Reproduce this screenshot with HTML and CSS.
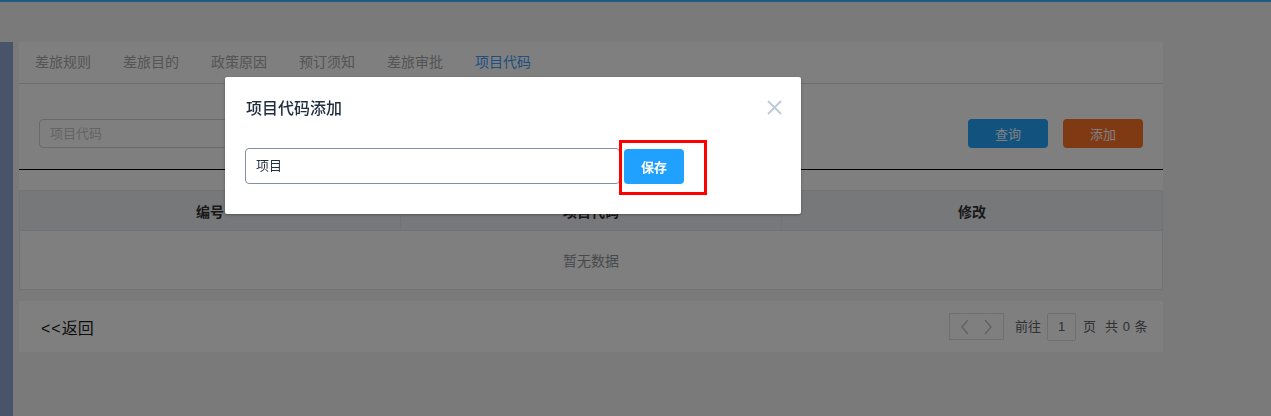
FILE: index.html
```html
<!DOCTYPE html>
<html lang="zh-CN">
<head>
<meta charset="utf-8">
<title>项目代码</title>
<link rel="stylesheet" href="styles.css">
</head>
<body>
<div class="topbar"></div>
<div class="layout">
  <aside class="sidebar"></aside>
  <main class="main">
    <section class="panel">
      <nav class="tabs">
        <span class="tab">差旅规则</span>
        <span class="tab">差旅目的</span>
        <span class="tab">政策原因</span>
        <span class="tab">预订须知</span>
        <span class="tab">差旅审批</span>
        <span class="tab active">项目代码</span>
      </nav>
      <div class="search">
        <div class="search-input">项目代码</div>
        <div class="search-actions">
          <button class="btn btn-query">查询</button>
          <button class="btn btn-add">添加</button>
        </div>
      </div>
      <div class="table-gap"></div>
      <table class="grid">
        <thead>
          <tr><th>编号</th><th>项目代码</th><th>修改</th></tr>
        </thead>
        <tbody>
          <tr><td colspan="3" class="empty">暂无数据</td></tr>
        </tbody>
      </table>
    </section>
    <section class="footer">
      <a class="back"><span class="arrows">&lt;&lt;</span>返回</a>
      <div class="pager">
        <span class="pager-nav">
          <svg width="12" height="16" viewBox="0 0 12 16"><path d="M9 1 L3 8 L9 15" fill="none" stroke="#c0c4cc" stroke-width="1.4"/></svg>
          <svg width="12" height="16" viewBox="0 0 12 16"><path d="M3 1 L9 8 L3 15" fill="none" stroke="#c0c4cc" stroke-width="1.4"/></svg>
        </span>
        <span class="pager-text">前往</span>
        <span class="pager-input">1</span>
        <span class="pager-text">页</span>
        <span class="pager-text total">共 0 条</span>
      </div>
    </section>
  </main>
</div>
<div class="overlay"></div>
<div class="dialog">
  <div class="dialog-header">
    <span class="dialog-title">项目代码添加</span>
    <span class="dialog-close">
      <svg width="15" height="15" viewBox="0 0 15 15"><path d="M1 1 L14 14 M14 1 L1 14" stroke="#bfcbd9" stroke-width="2" fill="none"/></svg>
    </span>
  </div>
  <div class="dialog-body">
    <div class="dialog-input">项目</div>
    <button class="btn-save">保存</button>
  </div>
  <div class="highlight"></div>
</div>
</body>
</html>
```
FILE: styles.css
```css
* { box-sizing: border-box; }
html, body { height: 100%; }
body {
  margin: 0;
  background: #f5f5f5;
  font-family: "Liberation Sans", "Noto Sans CJK SC", sans-serif;
  overflow: hidden;
}
.topbar { height: 2px; background: #3cb4ff; }
.layout { display: flex; margin-top: 40px; height: 374px; }
.sidebar { width: 13px; background: #90a8d2; }
.main { margin-left: 6px; width: 1144px; }
.panel { background: #fff; }
.tabs { display: flex; height: 42px; border-bottom: 1px solid #dcdcdc; }
.tab { padding: 0 16px; font-size: 14px; line-height: 41px; color: #a8a8a8; }
.tab.active { color: #409eff; }
.search {
  display: flex;
  align-items: flex-start;
  height: 86px;
  padding: 35px 20px 0 20px;
  border-bottom: 1px solid #000;
}
.search-input {
  width: 220px;
  height: 29px;
  border: 1px solid #cfd5de;
  border-radius: 4px;
  padding-left: 10px;
  font-size: 13px;
  line-height: 27px;
  color: #c8c8c8;
}
.search-actions { margin-left: auto; display: flex; gap: 15px; }
.btn {
  width: 80px;
  height: 29px;
  border: 0;
  border-radius: 4px;
  font-family: inherit;
  font-size: 13px;
  color: #fff;
}
.btn-query { background: #22a4ff; }
.btn-add { background: #ff7428; }
.table-gap { height: 20px; }
.grid {
  width: 100%;
  border-collapse: collapse;
  border: 1px solid #e2e8ee;
  table-layout: fixed;
}
.grid th {
  height: 40px;
  padding: 0;
  background: #eef0f3;
  border: 1px solid #e2e8ee;
  font-size: 14px;
  font-weight: bold;
  color: #333;
}
.grid td.empty {
  height: 59px;
  padding: 0;
  text-align: center;
  font-size: 14px;
  color: #909399;
}
.footer {
  margin-top: 11px;
  height: 51px;
  background: #fff;
  display: flex;
  align-items: center;
  padding: 0 15px 0 22px;
}
.back { font-size: 16px; color: #1a1a1a; }
.arrows { letter-spacing: 1px; }
.pager { margin-left: auto; display: flex; align-items: center; font-size: 13px; color: #606266; }
.pager-nav {
  display: flex;
  align-items: center;
  justify-content: space-around;
  width: 55px;
  height: 27px;
  border: 1px solid #dcdfe6;
  padding: 0 4px;
  margin-right: 11px;
}
.pager-text { line-height: 28px; }
.pager-input {
  width: 29px;
  height: 28px;
  border: 1px solid #dcdfe6;
  border-radius: 2px;
  text-align: center;
  line-height: 26px;
  margin: 0 7px 0 6px;
}
.total { margin-left: 9px; letter-spacing: 0.5px; }
.overlay { position: fixed; inset: 0; background: rgba(0, 0, 0, 0.5); }
.dialog {
  position: absolute;
  left: 225px;
  top: 77px;
  width: 576px;
  background: #fff;
  border-radius: 2px;
  box-shadow: 0 1px 3px rgba(0, 0, 0, 0.3);
}
.dialog-header { padding: 20px 20px 10px 21px; position: relative; }
.dialog-title { font-size: 16px; line-height: 24px; color: #1f2d3d; display: block; font-weight: 500; }
.dialog-close { position: absolute; top: 23px; right: 19px; width: 15px; height: 15px; }
.dialog-close svg { display: block; }
.dialog-body { display: flex; align-items: flex-start; padding: 17px 20px 30px; }
.dialog-input {
  width: 375px;
  height: 36px;
  border: 1px solid #8391a5;
  border-radius: 4px;
  padding-left: 10px;
  font-size: 13px;
  line-height: 34px;
  color: #1f2d3d;
}
.btn-save {
  margin: 1px 0 0 4px;
  width: 60px;
  height: 35px;
  border: 0;
  border-radius: 4px;
  background: #20a0ff;
  color: #fff;
  font-family: inherit;
  font-size: 13px;
  font-weight: bold;
}
.highlight {
  position: absolute;
  left: 394px;
  top: 63px;
  width: 88px;
  height: 55px;
  border: 3px solid #ff0000;
}
```
